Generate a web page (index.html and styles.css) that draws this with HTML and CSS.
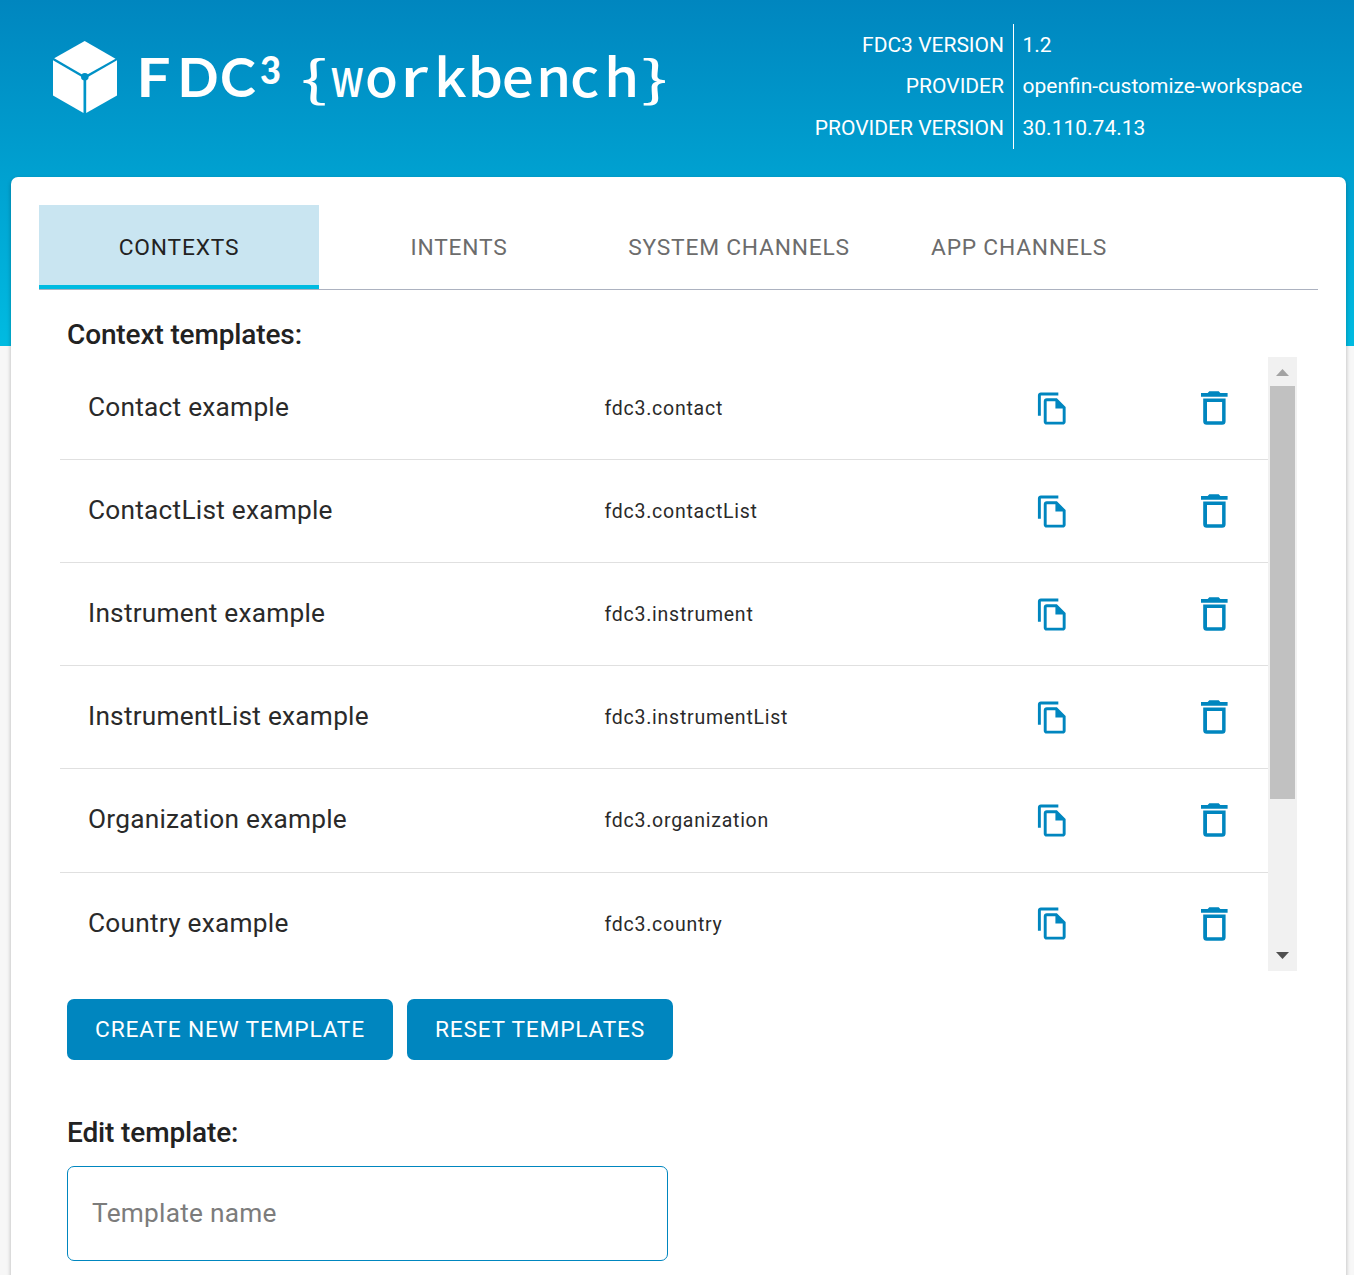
FILE: index.html
```html
<!DOCTYPE html>
<html lang="en">
<head>
<meta charset="utf-8">
<title>FDC3 Workbench</title>
<link rel="stylesheet" href="styles.css">
</head>
<body>
<svg width="0" height="0" class="defs">
  <symbol id="copy" viewBox="0 0 24 24"><path d="M16 1H4c-1.1 0-2 .9-2 2v14h2V3h12V1zm-1 4H8c-1.1 0-1.99.9-1.99 2L6 21c0 1.1.89 2 1.99 2H19c1.1 0 2-.9 2-2V11l-6-6zM8 21V7h6v5h5v9H8z"/></symbol>
  <symbol id="trash" viewBox="0 0 28 36"><path fill-rule="evenodd" d="M1 3H7.7L9.3 1.2H18.7L20.3 3H27.6V6.8H1zM3.2 8.6H25.6V31.3a3.5 3.5 0 0 1-3.5 3.5H6.7a3.5 3.5 0 0 1-3.5-3.5zM7 12V31.2H22.1V12z"/></symbol>
</svg>
<div class="page">
  <header class="header">
    <svg class="logo" viewBox="0 0 630 100" width="630" height="100">
      <path d="M32.7 1L63.5 18.7 32.7 36.1 2.2 18.2z"/>
      <path d="M1 20.2L31.5 38V73L1 55.6z"/>
      <path d="M65 20.2L34.2 38V73L65 55.6z"/>
      <circle class="node" cx="32.8" cy="36.8" r="3.8"/>
      <text class="brand" x="84.500" y="56.800" textLength="34" lengthAdjust="spacingAndGlyphs">F</text>
      <text class="brand" x="125.500 168" y="56.800">DC</text>
      <text class="brand-sup" x="208" y="43.500" textLength="21" lengthAdjust="spacingAndGlyphs">3</text>
      <text class="tool brace" y="57" x="248.500" textLength="27" lengthAdjust="spacingAndGlyphs">{</text>
      <text class="tool" y="57" x="278.500" textLength="33.500" lengthAdjust="spacingAndGlyphs">w</text>
      <text class="tool" y="57" x="313" textLength="33" lengthAdjust="spacingAndGlyphs">o</text>
      <text class="tool" y="57" x="348" textLength="28" lengthAdjust="spacingAndGlyphs">r</text>
      <text class="tool" transform="scale(1.09 1)" y="57" x="350.500 381.200 412.700 444 475.200 506.500">kbench</text>
      <text class="tool brace" y="57" x="589" textLength="27" lengthAdjust="spacingAndGlyphs">}</text>
    </svg>
    <dl class="info">
      <dt>FDC3 VERSION</dt><dd>1.2</dd>
      <dt>PROVIDER</dt><dd>openfin-customize-workspace</dd>
      <dt>PROVIDER VERSION</dt><dd>30.110.74.13</dd>
    </dl>
  </header>
  <main class="card">
    <nav class="tabs">
      <a class="tab active">CONTEXTS</a>
      <a class="tab">INTENTS</a>
      <a class="tab">SYSTEM CHANNELS</a>
      <a class="tab">APP CHANNELS</a>
    </nav>
    <section class="panel">
      <h2 class="heading">Context templates:</h2>
      <div class="list">
        <div class="rows">
          <div class="row"><span class="name">Contact example</span><span class="type">fdc3.contact</span><svg class="copy"><use href="#copy"/></svg><svg class="trash"><use href="#trash"/></svg></div>
          <div class="row"><span class="name">ContactList example</span><span class="type">fdc3.contactList</span><svg class="copy"><use href="#copy"/></svg><svg class="trash"><use href="#trash"/></svg></div>
          <div class="row"><span class="name">Instrument example</span><span class="type">fdc3.instrument</span><svg class="copy"><use href="#copy"/></svg><svg class="trash"><use href="#trash"/></svg></div>
          <div class="row"><span class="name">InstrumentList example</span><span class="type">fdc3.instrumentList</span><svg class="copy"><use href="#copy"/></svg><svg class="trash"><use href="#trash"/></svg></div>
          <div class="row"><span class="name">Organization example</span><span class="type">fdc3.organization</span><svg class="copy"><use href="#copy"/></svg><svg class="trash"><use href="#trash"/></svg></div>
          <div class="row"><span class="name">Country example</span><span class="type">fdc3.country</span><svg class="copy"><use href="#copy"/></svg><svg class="trash"><use href="#trash"/></svg></div>
        </div>
        <div class="scrollbar">
          <svg class="arrow up" viewBox="0 0 29 29"><path d="M8 19L14.500 12L21 19z"/></svg>
          <div class="thumb"></div>
          <svg class="arrow down" viewBox="0 0 29 29"><path d="M8 10L14.500 17L21 10z"/></svg>
        </div>
      </div>
      <div class="buttons">
        <button class="btn create">CREATE NEW TEMPLATE</button>
        <button class="btn reset">RESET TEMPLATES</button>
      </div>
      <h2 class="heading edit">Edit template:</h2>
      <input class="field" type="text" placeholder="Template name">
    </section>
  </main>
</div>
</body>
</html>
```
FILE: styles.css
```css
* { box-sizing: border-box; }
body {
  margin: 0;
  height: 1275px;
  overflow: hidden;
  background: #f7f7f7 linear-gradient(180deg, #0086bf 0, #00bbe1 346px) no-repeat 0 0 / 100% 346px;
  font-family: Roboto, "Liberation Sans", sans-serif;
  color: #222;
}
.defs { display: none; }
.page { padding: 0 8px 0 11px; }
.header {
  height: 177px;
  display: flex;
  justify-content: space-between;
  align-items: flex-start;
  padding: 24px 43px 0 41px;
}
.logo { margin-top: 16px; fill: #fff; flex: none; overflow: visible; }
.node { fill: #0090c5; }
.brand { font: 700 54px Lato, sans-serif; }
.brand-sup { font: 900 37px Lato, sans-serif; }
.tool { font: 500 52px "Noto Sans CJK SC", sans-serif; }
.brace { font-size: 49px; font-weight: 400; }
.info {
  margin: 0;
  display: grid;
  grid-template-columns: auto 289px;
  grid-template-rows: 41px 42px 42px;
  font-size: 21px;
  line-height: 43px;
  color: #fff;
}
.info dt { text-align: right; padding-right: 9px; border-right: 1px solid #fff; white-space: nowrap; }
.info dd { margin: 0; padding-left: 8.500px; white-space: nowrap; }
.card {
  height: 1120px;
  padding: 28px;
  background: #fff;
  border-radius: 7px;
  box-shadow: 0 2px 4px rgba(0, 0, 0, .28);
}
.tabs { display: flex; height: 85px; border-bottom: 1px solid #acb2c0; }
.tab {
  width: 280px;
  height: 84px;
  line-height: 85px;
  text-align: center;
  font-size: 22.750px;
  letter-spacing: .8px;
  color: #6c6c6c;
}
.tab.active { background: #c9e5f1; color: #222; border-bottom: 4px solid #00bbe1; }
.panel { padding: 26px 21px 0; }
.heading { margin: 0 0 3px 7px; font-size: 28px; line-height: 38px; font-weight: 500; letter-spacing: -.13px; }
.list { display: flex; height: 614px; overflow: hidden; }
.rows { flex: 1; }
.row {
  display: grid;
  grid-template-columns: 516px 431px 165px 28px;
  align-items: center;
  height: 103.120px;
  padding: 0 0 0 28px;
  border-bottom: 1px solid #e0e0e0;
}
.name { font-size: 26.250px; letter-spacing: .24px; padding-bottom: 2px; color: #2a2a2a; }
.type { font-size: 19.500px; letter-spacing: .75px; padding: 1px 0 0 .5px; color: #2a2a2a; }
.copy { width: 35px; height: 35px; margin-top: .6px; fill: #0086bf; }
.trash { width: 28px; height: 36px; fill: #0086bf; }
.scrollbar { width: 29px; background: #f1f1f1; display: flex; flex-direction: column; }
.arrow { width: 29px; height: 29px; }
.up { fill: #a3a3a3; }
.down { fill: #505050; margin-top: auto; }
.thumb { height: 413px; margin: 0 2px; background: #c1c1c1; }
.buttons { display: flex; gap: 14px; margin: 28px 0 54px 7px; }
.btn {
  height: 61px;
  padding: 0;
  border: 0;
  border-radius: 7px;
  background: #0086bf;
  color: #fff;
  font: 400 22.750px Roboto, sans-serif;
  letter-spacing: .780px;
}
.create { width: 326px; }
.reset { width: 266px; }
.edit { margin-bottom: 14px; }
.field {
  display: block;
  width: 601px;
  height: 95px;
  margin-left: 7px;
  padding: 0 24px 2px;
  border: 1px solid #0086bf;
  border-radius: 7px;
  font: 400 26.250px Roboto, sans-serif;
  letter-spacing: .24px;
}
.field::placeholder { color: #7c7c7c; }
```
